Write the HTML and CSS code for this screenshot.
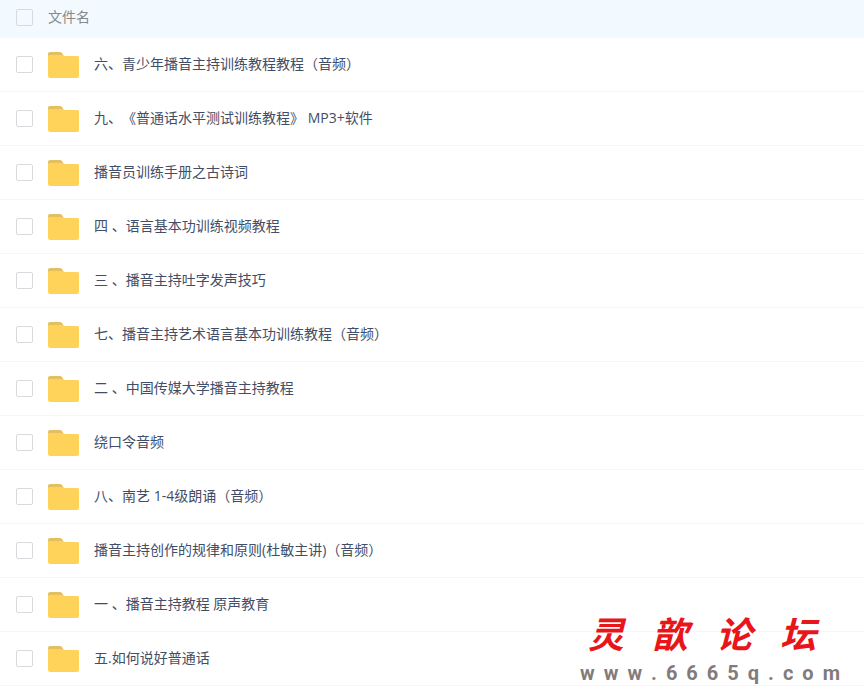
FILE: index.html
```html
<!DOCTYPE html>
<html lang="zh-CN">
<head>
    <meta charset="UTF-8">
    <meta name="viewport" content="width=device-width, initial-scale=1.0">
    <title>文件列表</title>
    <link rel="stylesheet" href="styles.css">
</head>
<body>
    <!-- Folder icon shared by all rows -->
    <svg class="sprite" aria-hidden="true">
        <symbol id="folder" viewBox="0 0 32 26">
            <path d="M0 10V2Q0 0 2 0H12Q13 0 14 1L17 6V10Z" fill="#e3bf62"/>
            <path d="M0 4Q0 3 1 3H14L16 4H30Q31 4 31 6V24Q31 26 29 26H2Q0 26 0 24Z" fill="#ffd35a"/>
        </symbol>
    </svg>

    <div class="container">
        <table class="file-table">
            <thead>
                <tr>
                    <th class="check"><input type="checkbox" id="checkAll" aria-label="全选"></th>
                    <th colspan="2"><label for="checkAll">文件名</label></th>
                </tr>
            </thead>
            <tbody>
                <tr>
                    <td class="check"><input type="checkbox" id="file1"></td>
                    <td class="icon"><svg class="folder"><use href="#folder"/></svg></td>
                    <td><label for="file1">六、青少年播音主持训练教程教程（音频）</label></td>
                </tr>
                <tr>
                    <td class="check"><input type="checkbox" id="file2"></td>
                    <td class="icon"><svg class="folder"><use href="#folder"/></svg></td>
                    <td><label for="file2">九、《普通话水平测试训练教程》 MP3+软件</label></td>
                </tr>
                <tr>
                    <td class="check"><input type="checkbox" id="file3"></td>
                    <td class="icon"><svg class="folder"><use href="#folder"/></svg></td>
                    <td><label for="file3">播音员训练手册之古诗词</label></td>
                </tr>
                <tr>
                    <td class="check"><input type="checkbox" id="file4"></td>
                    <td class="icon"><svg class="folder"><use href="#folder"/></svg></td>
                    <td><label for="file4">四 、语言基本功训练视频教程</label></td>
                </tr>
                <tr>
                    <td class="check"><input type="checkbox" id="file5"></td>
                    <td class="icon"><svg class="folder"><use href="#folder"/></svg></td>
                    <td><label for="file5">三 、播音主持吐字发声技巧</label></td>
                </tr>
                <tr>
                    <td class="check"><input type="checkbox" id="file6"></td>
                    <td class="icon"><svg class="folder"><use href="#folder"/></svg></td>
                    <td><label for="file6">七、播音主持艺术语言基本功训练教程（音频）</label></td>
                </tr>
                <tr>
                    <td class="check"><input type="checkbox" id="file7"></td>
                    <td class="icon"><svg class="folder"><use href="#folder"/></svg></td>
                    <td><label for="file7">二 、中国传媒大学播音主持教程</label></td>
                </tr>
                <tr>
                    <td class="check"><input type="checkbox" id="file8"></td>
                    <td class="icon"><svg class="folder"><use href="#folder"/></svg></td>
                    <td><label for="file8">绕口令音频</label></td>
                </tr>
                <tr>
                    <td class="check"><input type="checkbox" id="file9"></td>
                    <td class="icon"><svg class="folder"><use href="#folder"/></svg></td>
                    <td><label for="file9">八、南艺 1-4级朗诵（音频）</label></td>
                </tr>
                <tr>
                    <td class="check"><input type="checkbox" id="file10"></td>
                    <td class="icon"><svg class="folder"><use href="#folder"/></svg></td>
                    <td><label for="file10">播音主持创作的规律和原则(杜敏主讲)（音频）</label></td>
                </tr>
                <tr>
                    <td class="check"><input type="checkbox" id="file11"></td>
                    <td class="icon"><svg class="folder"><use href="#folder"/></svg></td>
                    <td><label for="file11">一 、播音主持教程 原声教育</label></td>
                </tr>
                <tr>
                    <td class="check"><input type="checkbox" id="file12"></td>
                    <td class="icon"><svg class="folder"><use href="#folder"/></svg></td>
                    <td><label for="file12">五.如何说好普通话</label></td>
                </tr>
            </tbody>
        </table>

        <!-- Forum watermark -->
        <div class="watermark">
            <div class="forum-name"><span>灵</span><span>歆</span><span>论</span><span>坛</span></div>
            <div class="forum-url"><span>w</span><span>w</span><span>w</span><span>.</span><span>6</span><span>6</span><span>6</span><span>5</span><span>q</span><span>.</span><span>c</span><span>o</span><span>m</span></div>
        </div>
    </div>
</body>
</html>
```
FILE: styles.css
```css
body {
    font-family: "Open Sans", "Noto Sans CJK SC", sans-serif;
    font-size: 14px;
    line-height: 20px;
    color: #424e67;
    background-color: #fff;
    margin: 0;
    text-spacing-trim: space-all;
}
.sprite {
    display: none;
}
.container {
    position: relative;
}
.file-table {
    width: 100%;
    border-collapse: separate;
    border-spacing: 0;
}
th, td {
    box-sizing: border-box;
    padding: 0;
    text-align: left;
    vertical-align: middle;
}
th {
    height: 38px;
    padding-bottom: 4px;
    font-weight: normal;
    color: #888;
    background-color: #f2faff;
}
td {
    height: 54px;
    border-bottom: 1px solid #f4f6f8;
}
label {
    display: block;
}
td label {
    padding-bottom: 2px;
}
.check {
    width: 48px;
    padding-left: 16px;
}
.icon {
    width: 46px;
}
input[type="checkbox"] {
    appearance: none;
    display: block;
    box-sizing: border-box;
    width: 17px;
    height: 17px;
    margin: 0;
    border: 1px solid #d8d9dc;
    border-radius: 2px;
    background-color: #fff;
    cursor: pointer;
}
th input[type="checkbox"] {
    background-color: transparent;
}
input[type="checkbox"]:checked {
    background-color: #3b8cff;
}
.folder {
    display: block;
    width: 32px;
    height: 26px;
}
.watermark {
    position: absolute;
    right: 24px;
    bottom: 0;
    width: 260px;
    pointer-events: none;
}
.forum-name {
    display: flex;
    justify-content: space-between;
    padding: 0 24px 4px 8px;
    font-family: "Noto Sans CJK SC", sans-serif;
    font-size: 36px;
    font-style: italic;
    font-weight: bold;
    line-height: 48px;
    color: #e8151b;
}
.forum-url {
    display: flex;
    justify-content: space-between;
    font-family: "Liberation Sans Narrow", Roboto, sans-serif;
    font-size: 20px;
    font-weight: bold;
    line-height: 26px;
    color: #827b7b;
}
```
